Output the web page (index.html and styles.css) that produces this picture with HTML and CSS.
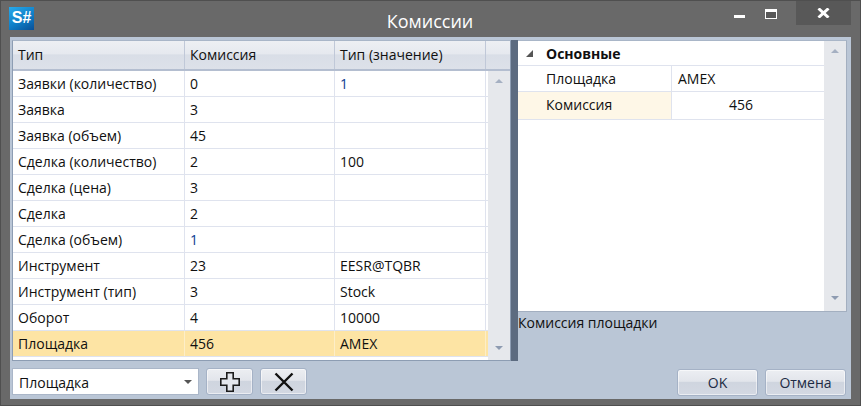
FILE: index.html
```html
<!DOCTYPE html>
<html lang="ru">
<head>
  <meta charset="UTF-8">
  <title>Комиссии</title>
  <link rel="stylesheet" href="styles.css">
</head>
<body>
  <div class="window">
    <div class="titlebar">
      <div class="logo">S#</div>
      <div class="title">Комиссии</div>
      <div class="controls">
        <div class="ctl"><span class="min"></span></div>
        <div class="ctl"><span class="max"></span></div>
        <div class="ctl close">
          <svg width="13" height="10" viewBox="0 0 13 10"><path d="M1.5 0.5 L11.5 9.5 M11.5 0.5 L1.5 9.5" stroke="#fff" stroke-width="3" fill="none"/></svg>
        </div>
      </div>
    </div>
    <div class="client">
      <div class="main">
        <div class="grid">
          <div class="grid-head">
            <div class="hcell c1">Тип</div>
            <div class="hcell c2">Комиссия</div>
            <div class="hcell c3">Тип (значение)</div>
            <div class="hcell c4"></div>
          </div>
          <div class="grid-body">
            <div class="rows">
              <div class="row"><div class="cell c1">Заявки (количество)</div><div class="cell c2">0</div><div class="cell c3 blue">1</div></div>
              <div class="row"><div class="cell c1">Заявка</div><div class="cell c2">3</div><div class="cell c3"></div></div>
              <div class="row"><div class="cell c1">Заявка (объем)</div><div class="cell c2">45</div><div class="cell c3"></div></div>
              <div class="row"><div class="cell c1">Сделка (количество)</div><div class="cell c2">2</div><div class="cell c3">100</div></div>
              <div class="row"><div class="cell c1">Сделка (цена)</div><div class="cell c2">3</div><div class="cell c3"></div></div>
              <div class="row"><div class="cell c1">Сделка</div><div class="cell c2">2</div><div class="cell c3"></div></div>
              <div class="row"><div class="cell c1">Сделка (объем)</div><div class="cell c2 blue">1</div><div class="cell c3"></div></div>
              <div class="row"><div class="cell c1">Инструмент</div><div class="cell c2">23</div><div class="cell c3">EESR@TQBR</div></div>
              <div class="row"><div class="cell c1">Инструмент (тип)</div><div class="cell c2">3</div><div class="cell c3">Stock</div></div>
              <div class="row"><div class="cell c1">Оборот</div><div class="cell c2">4</div><div class="cell c3">10000</div></div>
              <div class="row selected"><div class="cell c1">Площадка</div><div class="cell c2">456</div><div class="cell c3">AMEX</div></div>
            </div>
            <div class="scrollbar">
              <span class="arrow up"></span>
              <span class="arrow down"></span>
            </div>
          </div>
        </div>
        <div class="splitter"></div>
        <div class="side">
          <div class="props">
            <div class="props-list">
              <div class="prop-group">
                <span class="tri"></span>
                <span>Основные</span>
              </div>
              <div class="prop-row">
                <div class="prop-name">Площадка</div>
                <div class="prop-value">AMEX</div>
              </div>
              <div class="prop-row active">
                <div class="prop-name">Комиссия</div>
                <div class="prop-value num">456</div>
              </div>
            </div>
            <div class="scrollbar">
              <span class="arrow up"></span>
              <span class="arrow down"></span>
            </div>
          </div>
          <div class="desc">Комиссия площадки</div>
        </div>
      </div>
      <div class="footer">
        <div class="combo">
          <span>Площадка</span>
          <span class="combo-arrow"></span>
        </div>
        <button class="btn icon-btn">
          <svg width="20" height="20" viewBox="0 0 20 20"><path d="M6.8 0.8 H13.2 V6.8 H19.2 V13.2 H13.2 V19.2 H6.8 V13.2 H0.8 V6.8 H6.8 Z" fill="#e4e7ed" stroke="#1c1c1c" stroke-width="1.6"/></svg>
        </button>
        <button class="btn icon-btn">
          <svg width="20" height="20" viewBox="0 0 20 20"><path d="M1.5 1.5 L18.5 18.5 M18.5 1.5 L1.5 18.5" stroke="#111" stroke-width="2.4" fill="none"/></svg>
        </button>
        <div class="spacer"></div>
        <button class="btn text-btn">OK</button>
        <button class="btn text-btn">Отмена</button>
      </div>
    </div>
  </div>
</body>
</html>
```

FILE: styles.css
```css
* {
  box-sizing: border-box;
}
html, body {
  margin: 0;
  height: 100%;
}
body {
  font-family: "Open Sans", "Noto Sans", sans-serif;
  font-size: 14px;
  color: #101010;
  overflow: hidden;
}
.window {
  width: 861px;
  height: 406px;
  background: #696969;
  border: 1px solid #4f4f4f;
  display: flex;
  flex-direction: column;
  padding: 0 9px 6px 9px;
}
.titlebar {
  height: 36px;
  flex: none;
  display: flex;
  margin: 0 -9px;
  position: relative;
}
.logo {
  position: absolute;
  left: 8px;
  top: 6px;
  width: 25px;
  height: 23px;
  background: linear-gradient(150deg, #28a9ea 0%, #0f7fc8 55%, #0a4f96 100%);
  color: #fff;
  font: bold 16px "Liberation Sans", sans-serif;
  line-height: 21px;
  text-align: center;
}
.title {
  flex: 1;
  text-align: center;
  color: #fff;
  font-size: 18px;
  font-weight: 500;
  line-height: 41px;
  padding-right: 1px;
}
.controls {
  position: absolute;
  right: 9px;
  top: 0;
  display: flex;
}
.ctl {
  width: 32px;
  height: 24px;
  display: flex;
  align-items: center;
  justify-content: center;
}
.ctl.close {
  width: 55px;
  margin-left: 9px;
  background: #585858;
}
.min {
  width: 11px;
  height: 3px;
  margin-top: 6px;
  background: #fff;
}
.max {
  width: 12px;
  height: 10px;
  margin-top: 2px;
  background: #585858;
  border: 1px solid #fff;
  border-top-width: 3px;
}
.client {
  flex: 1;
  background: #bac6d6;
  display: flex;
  flex-direction: column;
  padding: 3px 4px 0 2px;
}
.main {
  display: flex;
  height: 321px;
  flex: none;
}
.grid {
  width: 499px;
  border: 1px solid #8d9db3;
  border-top-color: #a9b6c8;
  background: #fff;
  display: flex;
  flex-direction: column;
}
.grid-head {
  display: flex;
  height: 30px;
  flex: none;
  background: linear-gradient(#edeff3 0%, #e6e9ef 45%, #d9dee7 50%, #dde1e9 100%);
  border-bottom: 2px solid #b4bed0;
}
.hcell {
  line-height: 28px;
  padding-left: 5px;
  border-right: 1px solid #c0c8d8;
}
.c1 {
  width: 172px;
}
.c2 {
  width: 150px;
}
.c3 {
  width: 151px;
}
.c4 {
  flex: 1;
  border-right: 0;
}
.grid-body {
  flex: 1;
  display: flex;
}
.rows {
  flex: 1;
}
.row {
  display: flex;
  height: 26px;
  border-bottom: 1px solid #dfe3ee;
}
.cell {
  padding-left: 5px;
  line-height: 25px;
  border-right: 1px solid #dfe3ee;
}
.blue {
  color: #0a3d91;
}
.row.selected {
  background: #fde4a4;
}
.row.selected .cell {
  border-right-color: #fdeec8;
}
.scrollbar {
  width: 22px;
  flex: none;
  background: #e6e8ec;
  display: flex;
  flex-direction: column;
  justify-content: space-between;
  align-items: center;
  padding: 8px 0 10px;
}
.props .scrollbar {
  padding-bottom: 11px;
}
.arrow {
  width: 0;
  height: 0;
  border-left: 4px solid transparent;
  border-right: 4px solid transparent;
}
.arrow.up {
  border-bottom: 4px solid #a5b0c2;
}
.arrow.down {
  border-top: 4px solid #8e9bb1;
}
.splitter {
  width: 7px;
  flex: none;
  background: #5c6b80;
}
.side {
  flex: 1;
  display: flex;
  flex-direction: column;
}
.props {
  height: 272px;
  flex: none;
  display: flex;
  background: #fff;
  border: 1px solid #a3afc0;
  border-left: 0;
  border-top-color: #a9b6c8;
}
.props-list {
  flex: 1;
}
.prop-group {
  height: 25px;
  line-height: 25px;
  font-weight: 700;
  padding-left: 8px;
  border-bottom: 1px solid #dfe3ee;
  display: flex;
  align-items: center;
  gap: 13px;
}
.tri {
  width: 0;
  height: 0;
  border-left: 7px solid transparent;
  border-bottom: 7px solid #555;
}
.prop-row {
  height: 26px;
  display: flex;
  line-height: 25px;
  border-bottom: 1px solid #dfe3ee;
}
.prop-row.active {
  height: 28px;
}
.prop-name {
  width: 154px;
  padding-left: 28px;
  border-right: 1px solid #dfe3ee;
}
.prop-value {
  flex: 1;
  padding-left: 6px;
}
.prop-value.num {
  padding-left: 57px;
}
.prop-row.active .prop-name {
  background: #fef7e7;
}
.desc {
  line-height: 22px;
  height: 24px;
}
.footer {
  display: flex;
  align-items: flex-start;
  padding: 7px 1px 0 0;
}
.combo {
  width: 187px;
  height: 27px;
  background: #fff;
  border: 1px solid #aab6c8;
  margin-right: 7px;
  padding: 1px 6px 0;
  line-height: 25px;
  display: flex;
  justify-content: space-between;
  align-items: center;
}
.combo-arrow {
  width: 0;
  height: 0;
  border-left: 4px solid transparent;
  border-right: 4px solid transparent;
  border-top: 4px solid #555;
}
.btn {
  font: inherit;
  color: #1d2b44;
  height: 27px;
  padding: 0;
  border: 1px solid #a5b2c6;
  border-radius: 3px;
  background: linear-gradient(#eceef2 0%, #e2e5eb 45%, #cfd5df 50%, #d3d8e2 100%);
  box-shadow: inset 0 0 0 1px rgba(255, 255, 255, 0.55);
  display: flex;
  align-items: center;
  justify-content: center;
}
.icon-btn {
  width: 47px;
  margin-right: 7px;
}
.spacer {
  flex: 1;
}
.text-btn {
  width: 81px;
  margin: 1px 0 0 7px;
}
```
